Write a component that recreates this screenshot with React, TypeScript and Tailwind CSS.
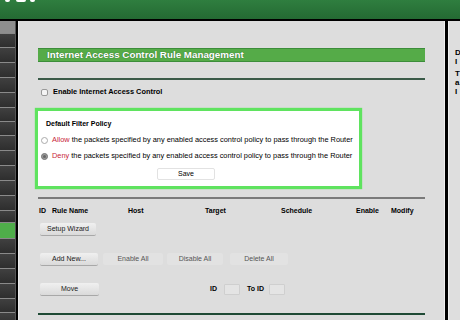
import React from "react";

const sideSeps = [33, 47, 62, 77, 92, 107, 121, 135, 150, 165, 180, 195, 210, 222, 238, 253, 268, 283, 298, 312, 327];

function Sidebar() {
  const items: { h: number; kind: string }[] = [];
  items.push({ h: 12, kind: "light" });
  for (let i = 1; i < sideSeps.length; i++) {
    const h = sideSeps[i] - sideSeps[i - 1] - 1;
    items.push({ h, kind: sideSeps[i - 1] === 222 ? "green" : "dark" });
  }
  return (
    <div className="w-[15px] shrink-0 flex flex-col bg-[#3a3a3a]">
      {items.map((it, i) => (
        <div key={i} className="flex flex-col">
          <div
            className={
              it.kind === "light"
                ? "bg-[#8e8e8e]"
                : it.kind === "green"
                ? "bg-[#4fae4a]"
                : "bg-gradient-to-b from-[#404040] to-[#2e2e2e]"
            }
            style={{ height: it.h }}
          />
          <div className="h-px bg-[#8a8a8a]" />
        </div>
      ))}
    </div>
  );
}

function Btn({ children, w, dim }: { children: React.ReactNode; w: string; dim?: boolean }) {
  return (
    <div
      className={`${w} h-[12px] flex items-center justify-center rounded-[2px] font-normal ${
        dim
          ? "bg-[#e2e2e2] text-[#555]"
          : "bg-gradient-to-b from-[#f0f0f0] to-[#dadada] text-[#1a1a1a] shadow-[0_1px_0_#a8a8a8]"
      } text-[7px]`}
    >
      {children}
    </div>
  );
}

function Radio({ checked }: { checked?: boolean }) {
  return (
    <div
      className={`w-[7px] h-[7px] rounded-full border ${
        checked ? "border-[#777] bg-[#9a9a9a]" : "border-[#aaa] bg-white"
      } flex items-center justify-center`}
    >
      {checked && <div className="w-[3px] h-[3px] rounded-full bg-[#666]" />}
    </div>
  );
}

export default function App() {
  return (
    <div
      className="w-[460px] h-[320px] overflow-hidden bg-[#dddddd] flex flex-col"
      style={{ fontFamily: '"Liberation Sans", Arial, sans-serif' }}
    >
      {/* header */}
      <div className="h-[19px] shrink-0 bg-gradient-to-b from-[#2f7e3f] to-[#246a33] flex items-start gap-[3px] pl-[5px]">
        <div className="w-[5px] h-[2px] bg-white rounded-b-sm" />
        <div className="w-[10px] h-[2px] bg-white rounded-b-sm ml-[3px]" />
        <div className="w-[5px] h-[2px] bg-white rounded-b-sm ml-[1px]" />
      </div>
      <div className="h-[2px] shrink-0 bg-black" />
      <div className="flex flex-1 min-h-0">
        <Sidebar />
        <div className="w-px bg-[#555]" />
        <div className="w-[2px] bg-black" />
        {/* main */}
        <div className="w-[426px] shrink-0 border-l border-[#ececec] pl-[19px] flex flex-col text-black">
          <div className="w-[387px] flex flex-col">
            <div className="mt-[27px] h-[14px] bg-[#55ab48] border-y border-[#3c8d3a] flex items-center pl-[9px]">
              <span className="text-white font-bold text-[9.8px] leading-none [text-shadow:0_0_1px_#2a5a2a]">
                Internet Access Control Rule Management
              </span>
            </div>
            <div className="mt-[16px] h-[2px] bg-[#3a5a48]" />
            <div className="mt-[6px] h-[12px] flex items-center pl-[3px]">
              <div className="w-[7px] h-[7px] rounded-[2px] border border-[#999] bg-[#f4f4f4]" />
              <span className="ml-[5px] text-[7.4px] font-bold">Enable Internet Access Control</span>
            </div>
            <div className="mt-[10px] ml-[-3px] w-[327px] border-[3px] border-[#5fe35f] bg-white flex flex-col pt-[8px] pb-[6px] shadow-[0_0_1px_#5fe35f]">
              <div className="h-[10px] flex items-center pl-[8px] text-[7px] font-bold">Default Filter Policy</div>
              <div className="mt-[6px] h-[10px] flex items-center pl-[3px] text-[7.4px] whitespace-nowrap">
                <Radio />
                <span className="ml-[4px]">
                  <span className="text-[#c8253a]">Allow</span> the packets specified by any enabled access control policy to pass through the Router
                </span>
              </div>
              <div className="mt-[6px] h-[10px] flex items-center pl-[3px] text-[7.4px] whitespace-nowrap">
                <Radio checked />
                <span className="ml-[4px]">
                  <span className="text-[#c8253a]">Deny</span> the packets specified by any enabled access control policy to pass through the Router
                </span>
              </div>
              <div className="mt-[7px] flex pl-[119px]">
                <div className="w-[58px] h-[12px] border border-[#e2e2e2] rounded-[2px] bg-white flex items-center justify-center text-[7px]">
                  Save
                </div>
              </div>
            </div>
            <div className="mt-[8px] h-[2px] bg-[#7a7a7a]" />
            <div className="mt-[7px] h-[10px] flex items-center text-[7px] font-bold pl-[1px]">
              <span className="w-[13px]">ID</span>
              <span className="w-[76px]">Rule Name</span>
              <span className="w-[77px]">Host</span>
              <span className="w-[76px]">Target</span>
              <span className="w-[75px]">Schedule</span>
              <span className="w-[35px]">Enable</span>
              <span>Modify</span>
            </div>
            <div className="mt-[7px] flex pl-[2px]">
              <Btn w="w-[56px]">Setup Wizard</Btn>
            </div>
            <div className="mt-[18px] flex pl-[2px]">
              <Btn w="w-[58px]">Add New...</Btn>
              <div className="ml-[5px]"><Btn w="w-[60px]" dim>Enable All</Btn></div>
              <div className="ml-[4px]"><Btn w="w-[56px]" dim>Disable All</Btn></div>
              <div className="ml-[7px]"><Btn w="w-[58px]" dim>Delete All</Btn></div>
            </div>
            <div className="mt-[18px] flex items-center pl-[2px] text-[7px]">
              <Btn w="w-[59px]">Move</Btn>
              <span className="ml-[111px] font-bold">ID</span>
              <div className="ml-[7px] w-[16px] h-[11px] border border-[#cfcfcf] bg-[#e4e4e4] rounded-[1px]" />
              <span className="ml-[7px] font-bold">To ID</span>
              <div className="ml-[5px] w-[16px] h-[11px] border border-[#cfcfcf] bg-[#e4e4e4] rounded-[1px]" />
            </div>
            <div className="mt-[18px] h-[2px] bg-[#1f4a35]" />
          </div>
        </div>
        <div className="w-px bg-[#f0f0f0]" />
        <div className="w-[3px] bg-black" />
        <div className="flex-1 bg-[#dedede] border-l border-[#f0f0f0] pl-[6px] pt-[27px] flex flex-col text-[8px] font-bold leading-[9px] text-black overflow-hidden">
          <span>D</span>
          <span>I</span>
          <span className="mt-[3px]">T</span>
          <span>a</span>
          <span>I</span>
        </div>
      </div>
    </div>
  );
}
